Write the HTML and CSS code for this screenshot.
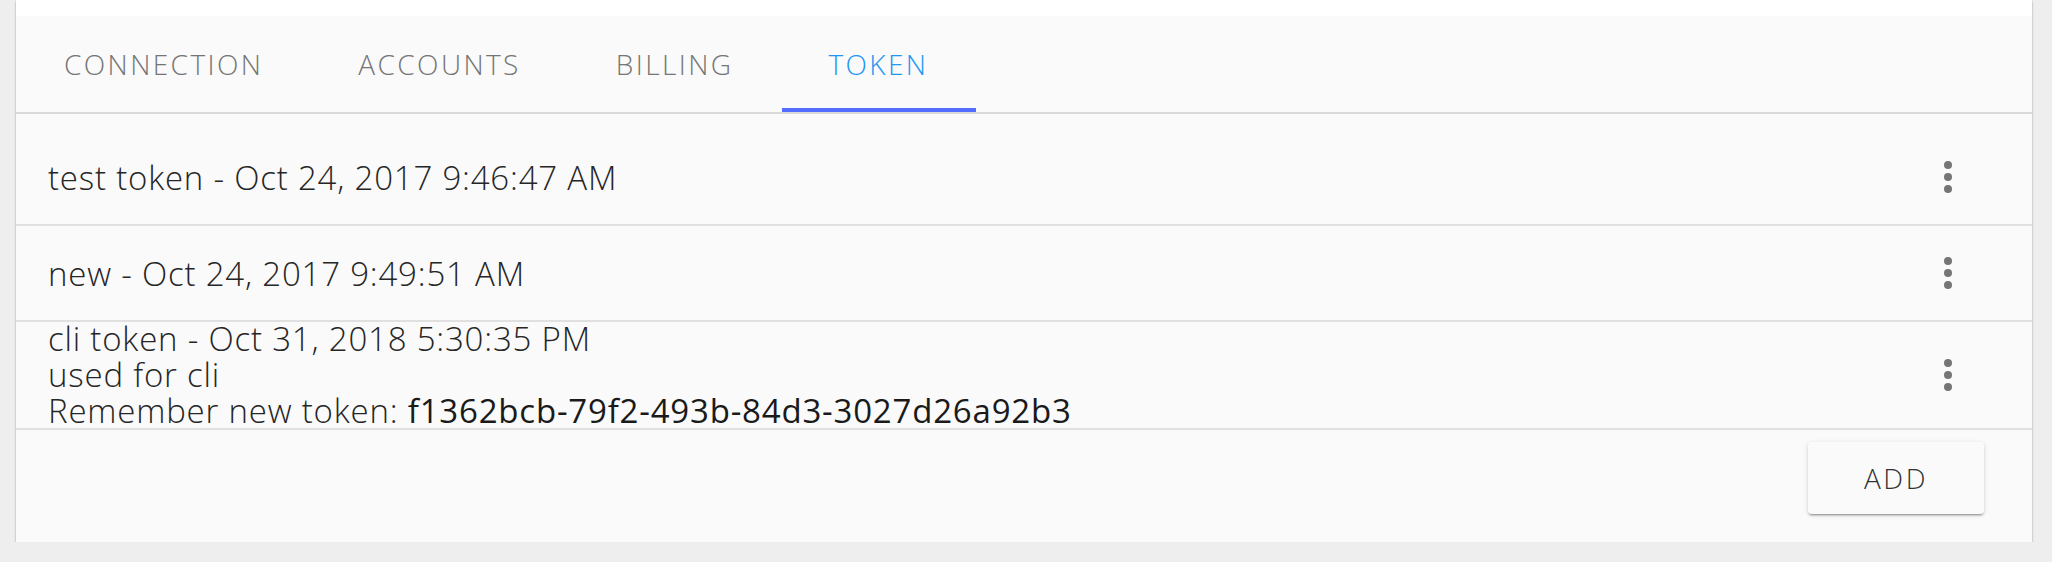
FILE: index.html
```html
<!DOCTYPE html>
<html lang="en">
<head>
<meta charset="utf-8">
<title>Token</title>
<link rel="stylesheet" href="styles.css">
</head>
<body>
<div class="card">
  <div class="card-top"></div>
  <nav class="tabs">
    <div class="tab">CONNECTION</div>
    <div class="tab">ACCOUNTS</div>
    <div class="tab">BILLING</div>
    <div class="tab active">TOKEN</div>
  </nav>
  <div class="list">
    <div class="row">
      <div class="text">test token - Oct 24, 2017 9:46:47 AM</div>
      <svg class="more" viewBox="0 0 24 24"><circle cx="12" cy="6" r="2"/><circle cx="12" cy="12" r="2"/><circle cx="12" cy="18" r="2"/></svg>
    </div>
    <div class="row">
      <div class="text">new - Oct 24, 2017 9:49:51 AM</div>
      <svg class="more" viewBox="0 0 24 24"><circle cx="12" cy="6" r="2"/><circle cx="12" cy="12" r="2"/><circle cx="12" cy="18" r="2"/></svg>
    </div>
    <div class="row tall">
      <div class="text">
        <div class="line">cli token - Oct 31, 2018 5:30:35 PM</div>
        <div class="line">used for cli</div>
        <div class="line">Remember new token: <strong>f1362bcb-79f2-493b-84d3-3027d26a92b3</strong></div>
      </div>
      <svg class="more" viewBox="0 0 24 24"><circle cx="12" cy="6" r="2"/><circle cx="12" cy="12" r="2"/><circle cx="12" cy="18" r="2"/></svg>
    </div>
  </div>
  <div class="footer">
    <button class="add">ADD</button>
  </div>
</div>
</body>
</html>
```
FILE: styles.css
```css
html, body {
  margin: 0;
  padding: 0;
  background: #eeeeee;
  font-family: "Open Sans", "Liberation Sans", sans-serif;
}

.card {
  margin-left: 16px;
  width: 2016px;
  background: #fafafa;
  box-shadow: 0 2px 2px rgba(0, 0, 0, 0.24), 0 0 2px rgba(0, 0, 0, 0.14);
}

.card-top {
  height: 16px;
  background: #ffffff;
}

.tabs {
  display: flex;
  height: 96px;
  border-bottom: 2px solid #d9d9d9;
}

.tab {
  position: relative;
  display: flex;
  align-items: center;
  padding: 0 47px 0 48px;
  font-size: 28px;
  font-weight: 300;
  letter-spacing: 2.4px;
  color: #757575;
}

.tab.active {
  color: #2196f3;
}

.tab.active::after {
  content: "";
  position: absolute;
  left: 2px;
  right: -1px;
  bottom: 0;
  height: 4px;
  background: #536dfe;
}

.list {
  padding-top: 16px;
}

.row {
  display: flex;
  align-items: center;
  height: 94px;
  padding: 0 60px 0 32px;
  border-bottom: 2px solid #e0e0e0;
  color: #262626;
  font-size: 33px;
  font-weight: 300;
  letter-spacing: 0.8px;
}

.row.tall {
  height: 106px;
}

.text {
  flex: 1;
  white-space: nowrap;
}

.line {
  line-height: 36px;
}

.line strong {
  font-weight: 400;
  color: #1a1a1a;
}

.more {
  width: 48px;
  height: 48px;
  fill: #757575;
}

.footer {
  display: flex;
  justify-content: flex-end;
  padding: 12px 48px 28px;
}

.add {
  width: 176px;
  height: 72px;
  border: none;
  border-radius: 4px;
  background: #fafafa;
  font-family: inherit;
  font-size: 28px;
  font-weight: 300;
  letter-spacing: 2.6px;
  color: #333333;
  box-shadow: 0 3px 1px -2px rgba(0, 0, 0, 0.2), 0 2px 2px rgba(0, 0, 0, 0.14), 0 1px 5px rgba(0, 0, 0, 0.12);
}
```
